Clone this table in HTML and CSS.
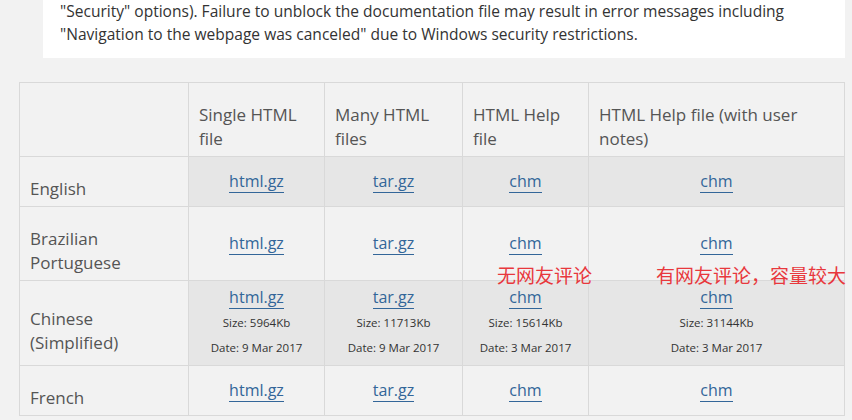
FILE: index.html
```html
<!DOCTYPE html>
<html lang="en">
<head>
    <meta charset="UTF-8">
    <meta name="viewport" content="width=device-width, initial-scale=1.0">
    <title>PHP Manual - Download documentation</title>
    <link rel="stylesheet" href="styles.css">
</head>
<body>
    <div class="note">
        <p>"Security" options). Failure to unblock the documentation file may result in error messages including "Navigation to the webpage was canceled" due to Windows security restrictions.</p>
    </div>

    <div class="downloads">
        <table class="doc-table">
            <colgroup>
                <col class="col-lang">
                <col class="col-single">
                <col class="col-many">
                <col class="col-chm">
                <col class="col-notes">
            </colgroup>
            <thead>
                <tr>
                    <th></th>
                    <th>Single HTML file</th>
                    <th>Many HTML files</th>
                    <th>HTML Help file</th>
                    <th>HTML Help file (with user notes)</th>
                </tr>
            </thead>
            <tbody>
                <tr class="dark">
                    <th>English</th>
                    <td><a href="#">html.gz</a></td>
                    <td><a href="#">tar.gz</a></td>
                    <td><a href="#">chm</a></td>
                    <td><a href="#">chm</a></td>
                </tr>
                <tr>
                    <th>Brazilian Portuguese</th>
                    <td><a href="#">html.gz</a></td>
                    <td><a href="#">tar.gz</a></td>
                    <td><a href="#">chm</a></td>
                    <td><a href="#">chm</a></td>
                </tr>
                <tr class="dark">
                    <th>Chinese (Simplified)</th>
                    <td>
                        <div class="link-line"><a href="#">html.gz</a></div>
                        <div class="meta">Size: 5964Kb</div>
                        <div class="meta">Date: 9 Mar 2017</div>
                    </td>
                    <td>
                        <div class="link-line"><a href="#">tar.gz</a></div>
                        <div class="meta">Size: 11713Kb</div>
                        <div class="meta">Date: 9 Mar 2017</div>
                    </td>
                    <td>
                        <div class="link-line"><a href="#">chm</a></div>
                        <div class="meta">Size: 15614Kb</div>
                        <div class="meta">Date: 3 Mar 2017</div>
                    </td>
                    <td>
                        <div class="link-line"><a href="#">chm</a></div>
                        <div class="meta">Size: 31144Kb</div>
                        <div class="meta">Date: 3 Mar 2017</div>
                    </td>
                </tr>
                <tr>
                    <th>French</th>
                    <td><a href="#">html.gz</a></td>
                    <td><a href="#">tar.gz</a></td>
                    <td><a href="#">chm</a></td>
                    <td><a href="#">chm</a></td>
                </tr>
            </tbody>
        </table>

        <!-- пометки поверх таблицы -->
        <span class="remark remark-chm">无网友评论</span>
        <span class="remark remark-notes">有网友评论，容量较大</span>
    </div>
</body>
</html>
```

FILE: styles.css
```css
body {
    margin: 0;
    padding: 0;
    background-color: #f2f2f2;
    color: #333;
    font-family: "Open Sans", "Noto Sans", sans-serif;
    height: 420px;
    overflow: hidden;
}

.note {
    background-color: #fff;
    margin-left: 43px;
    width: 785px;
    padding: 0 0 12px 17px;
}

.note p {
    margin: 0;
    font-size: 15.55px;
    line-height: 23px;
    color: #333;
}

.downloads {
    position: relative;
    margin: 24px 0 0 19px;
}

.doc-table {
    border-collapse: collapse;
    table-layout: fixed;
    width: 825px;
}

.col-lang { width: 169px; }
.col-single { width: 136px; }
.col-many { width: 138px; }
.col-chm { width: 126px; }
.col-notes { width: 256px; }

.doc-table th,
.doc-table td {
    border: 1px solid #d9d9d9;
    background-color: #f2f2f2;
}

.doc-table th {
    padding: 20px 10px 5px;
    text-align: left;
    font-weight: normal;
    font-size: 17px;
    line-height: 24px;
    color: #555;
    vertical-align: middle;
}

.doc-table td {
    padding: 4px 10px 5px;
    text-align: center;
    vertical-align: middle;
    font-size: 16px;
    line-height: 25px;
}

.doc-table tr.dark td {
    background-color: #e6e6e6;
}

.doc-table a {
    color: #369;
    text-decoration: none;
    border-bottom: 1px solid #369;
}

.doc-table .meta {
    font-size: 11.5px;
    line-height: 25px;
    color: #333;
}

.remark {
    position: absolute;
    top: 181px;
    font-family: "Noto Sans CJK SC", sans-serif;
    font-size: 19px;
    line-height: 24px;
    color: #e8383d;
    white-space: nowrap;
}

.remark-chm { left: 478px; }
.remark-notes { left: 637px; }
```
